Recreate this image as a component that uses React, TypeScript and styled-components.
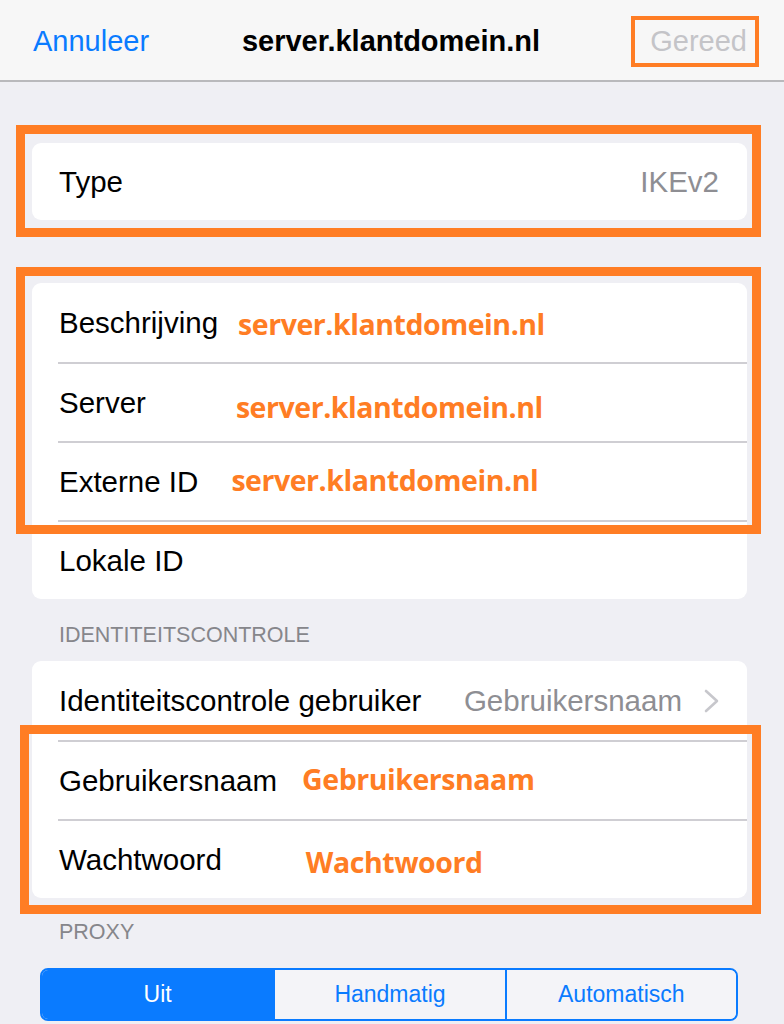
import React from "react";
import styled, { createGlobalStyle } from "styled-components";

const Global = createGlobalStyle`
  html, body { margin: 0; padding: 0; background: #efeff4; }
  body { font-family: "Liberation Sans", Arial, sans-serif; -webkit-font-smoothing: antialiased; }
  * { box-sizing: border-box; }
`;

const ORANGE = "#ff7d24";

const Page = styled.div`
  width: 784px;
  min-height: 1024px;
  background: #efeff4;
  overflow: hidden;
`;

const NavBar = styled.header`
  height: 82px;
  background: #f7f7f7;
  border-bottom: 2px solid #b9b9bc;
  display: grid;
  grid-template-columns: 1fr auto 1fr;
  align-items: center;
  padding: 2px 27px 0 33px;
`;

const NavLink = styled.span<{ $disabled?: boolean; $align?: "left" | "right" }>`
  font-size: 29px;
  color: ${(p) => (p.$disabled ? "#c4c4c8" : "#0a7bff")};
  justify-self: ${(p) => (p.$align === "right" ? "end" : "start")};
  position: relative;
  padding: ${(p) => (p.$align === "right" ? "0 10px 0 19px" : "0")};
  line-height: 47px;
`;

const NavTitle = styled.h1`
  margin: 0 0 0 -8px;
  font-size: 29px;
  font-weight: 700;
  color: #000;
`;

const Highlight = styled.div<{ $t: number; $r: number; $b: number; $l: number; $w: number }>`
  position: absolute;
  top: ${(p) => p.$t}px;
  right: ${(p) => p.$r}px;
  bottom: ${(p) => p.$b}px;
  left: ${(p) => p.$l}px;
  border: ${(p) => p.$w}px solid ${ORANGE};
  pointer-events: none;
`;

const Content = styled.main`
  padding: 61px 37px 0 32px;
  display: flex;
  flex-direction: column;
`;

const Card = styled.section<{ $mt?: number }>`
  position: relative;
  background: #fff;
  border-radius: 9px;
  margin-top: ${(p) => p.$mt ?? 0}px;
`;

const Row = styled.div<{ $h?: number }>`
  height: ${(p) => p.$h ?? 79}px;
  display: flex;
  align-items: center;
  padding: 0 28px 0 27px;
  position: relative;
  & + & {
    border-top: 2px solid #cfced3;
    margin-left: 26px;
    padding-left: 1px;
  }
`;

const Label = styled.span`
  font-size: 29.5px;
  color: #000;
  white-space: nowrap;
`;

const Value = styled.span`
  margin-left: auto;
  font-size: 29.5px;
  color: #8e8e93;
  white-space: nowrap;
`;

const Note = styled.span<{ $x: number; $dy: number }>`
  margin-left: ${(p) => p.$x}px;
  transform: translateY(${(p) => p.$dy}px);
  font-family: "Open Sans", "Liberation Sans", sans-serif;
  font-weight: 700;
  font-size: 28.5px;
  letter-spacing: -0.45px;
  color: ${ORANGE};
  white-space: nowrap;
`;

const Chevron = styled.svg`
  margin-left: 22px;
  flex: none;
`;

const SectionHeader = styled.div<{ $h: number; $pt?: number; $pb?: number }>`
  height: ${(p) => p.$h}px;
  padding: ${(p) => p.$pt ?? 0}px 0 ${(p) => p.$pb ?? 0}px 27px;
  display: flex;
  align-items: center;
  font-size: 21.5px;
  color: #86868b;
  text-transform: uppercase;
`;

const Segmented = styled.div`
  margin: 0 9px 0 8px;
  height: 53px;
  display: grid;
  grid-template-columns: 1fr 1fr 1fr;
  border: 2px solid #0a7bff;
  border-radius: 8px;
  overflow: hidden;
`;

const Segment = styled.div<{ $active?: boolean }>`
  display: flex;
  align-items: center;
  justify-content: center;
  font-size: 23px;
  color: ${(p) => (p.$active ? "#fff" : "#0a7bff")};
  background: ${(p) => (p.$active ? "#0a7bff" : "#f4f4f8")};
  & + & {
    border-left: 2px solid #0a7bff;
  }
`;

export default function App() {
  return (
    <Page>
      <Global />
      <NavBar>
        <NavLink>Annuleer</NavLink>
        <NavTitle>server.klantdomein.nl</NavTitle>
        <NavLink $disabled $align="right">
          Gereed
          <Highlight $t={-2} $r={-2} $b={-2} $l={0} $w={4} />
        </NavLink>
      </NavBar>
      <Content>
        <Card>
          <Row $h={77}>
            <Label>Type</Label>
            <Value>IKEv2</Value>
          </Row>
          <Highlight $t={-18} $r={-14} $b={-17} $l={-16} $w={9} />
        </Card>

        <Card $mt={63}>
          <Row>
            <Label>Beschrijving</Label>
            <Note $x={20} $dy={1}>server.klantdomein.nl</Note>
          </Row>
          <Row>
            <Label>Server</Label>
            <Note $x={90} $dy={4}>server.klantdomein.nl</Note>
          </Row>
          <Row>
            <Label>Externe ID</Label>
            <Note $x={33} $dy={-2}>server.klantdomein.nl</Note>
          </Row>
          <Row>
            <Label>Lokale ID</Label>
          </Row>
          <Highlight $t={-16} $r={-14} $b={65} $l={-16} $w={9} />
        </Card>

        <SectionHeader $h={62} $pt={10}>Identiteitscontrole</SectionHeader>

        <Card>
          <Row>
            <Label>Identiteitscontrole gebruiker</Label>
            <Value>Gebruikersnaam</Value>
            <Chevron width="15" height="24" viewBox="0 0 15 24">
              <polyline points="2,2 13,12 2,22" fill="none" stroke="#c7c7cc" strokeWidth="2.6" strokeLinecap="round" strokeLinejoin="round" />
            </Chevron>
          </Row>
          <Row>
            <Label>Gebruikersnaam</Label>
            <Note $x={25} $dy={-2}>Gebruikersnaam</Note>
          </Row>
          <Row>
            <Label>Wachtwoord</Label>
            <Note $x={84} $dy={2}>Wachtwoord</Note>
          </Row>
          <Highlight $t={64} $r={-14} $b={-16} $l={-12} $w={9} />
        </Card>

        <SectionHeader $h={70} $pb={2}>Proxy</SectionHeader>

        <Segmented>
          <Segment $active>Uit</Segment>
          <Segment>Handmatig</Segment>
          <Segment>Automatisch</Segment>
        </Segmented>
      </Content>
    </Page>
  );
}
